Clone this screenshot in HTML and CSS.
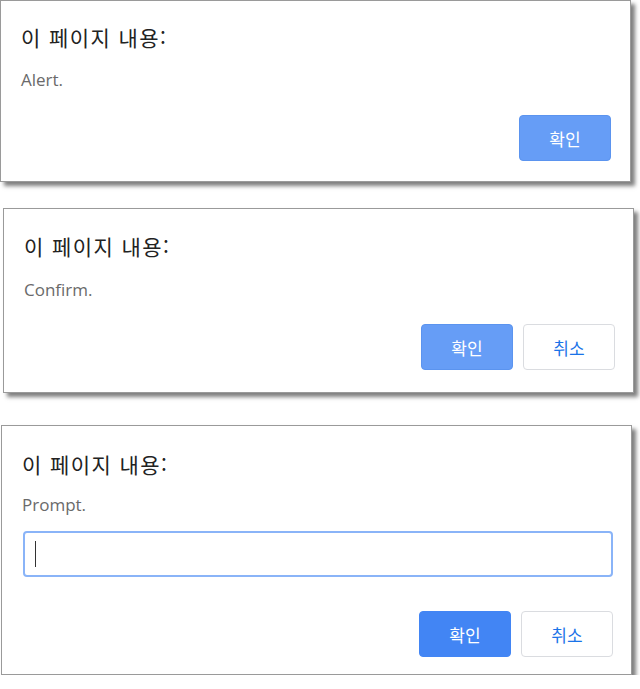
FILE: index.html
```html
<!DOCTYPE html>
<html lang="ko">
<head>
    <meta charset="UTF-8">
    <meta name="viewport" content="width=device-width, initial-scale=1.0">
    <title>Dialogs</title>
    <link rel="stylesheet" href="styles.css">
</head>
<body>
    <!-- alert -->
    <div class="dialog dialog-alert">
        <div class="dialog-title">이 페이지 내용:</div>
        <div class="dialog-message">Alert.</div>
        <div class="dialog-buttons">
            <button class="btn btn-ok btn-soft">확인</button>
        </div>
    </div>

    <!-- confirm -->
    <div class="dialog dialog-confirm">
        <div class="dialog-title">이 페이지 내용:</div>
        <div class="dialog-message">Confirm.</div>
        <div class="dialog-buttons">
            <button class="btn btn-ok btn-soft">확인</button>
            <button class="btn btn-cancel">취소</button>
        </div>
    </div>

    <!-- prompt -->
    <div class="dialog dialog-prompt">
        <div class="dialog-title">이 페이지 내용:</div>
        <div class="dialog-message">Prompt.</div>
        <div class="dialog-input"><span class="caret"></span></div>
        <div class="dialog-buttons">
            <button class="btn btn-ok">확인</button>
            <button class="btn btn-cancel">취소</button>
        </div>
    </div>
</body>
</html>
```

FILE: styles.css
```css
body {
    margin: 0;
    background: #fff;
    font-family: "Open Sans", "Noto Sans CJK KR", sans-serif;
}
.dialog {
    width: 631px;
    box-sizing: border-box;
    background: #fff;
    border: 1px solid #9a9a9a;
    box-shadow: 4px 4px 4px rgba(0, 0, 0, 0.5);
    padding: 22px 19px 20px 20px;
}
.dialog-title {
    font-family: "Noto Sans CJK KR", sans-serif;
    font-size: 21px;
    line-height: 28px;
    letter-spacing: 1.4px;
    color: #222;
}
.dialog-message {
    margin-top: 18px;
    font-size: 17px;
    line-height: 22px;
    color: #6a6a6a;
}
.dialog-buttons {
    display: flex;
    justify-content: flex-end;
    gap: 10px;
    margin-top: 24px;
}
.btn {
    width: 92px;
    height: 46px;
    box-sizing: border-box;
    border-radius: 4px;
    font-family: "Noto Sans CJK KR", sans-serif;
    font-size: 17px;
    cursor: pointer;
}
.btn-ok {
    background: #4285f4;
    border: 1px solid #4285f4;
    color: #fff;
}
.btn-soft {
    background: #669df6;
    border-color: #5b94ef;
}
.btn-cancel {
    background: #fff;
    border: 1px solid #dadce0;
    color: #1a73e8;
}
.dialog-alert {
    height: 182px;
}
.dialog-confirm {
    margin: 26px 0 0 3px;
    height: 185px;
    padding-top: 23px;
    padding-right: 18px;
}
.dialog-confirm .dialog-message {
    margin-top: 19px;
}
.dialog-confirm .dialog-buttons {
    margin-top: 23px;
}
.dialog-prompt {
    margin: 32px 0 0 1px;
    height: 250px;
    padding-top: 24px;
    padding-right: 18px;
}
.dialog-prompt .dialog-message {
    margin-top: 16px;
}
.dialog-input {
    display: flex;
    align-items: center;
    height: 46px;
    box-sizing: border-box;
    margin-top: 15px;
    margin-left: 1px;
    padding-left: 10px;
    border: 2px solid #8ab4f8;
    border-radius: 4px;
}
.caret {
    width: 1px;
    height: 26px;
    background: #333;
}
.dialog-prompt .dialog-buttons {
    margin-top: 34px;
}
```
